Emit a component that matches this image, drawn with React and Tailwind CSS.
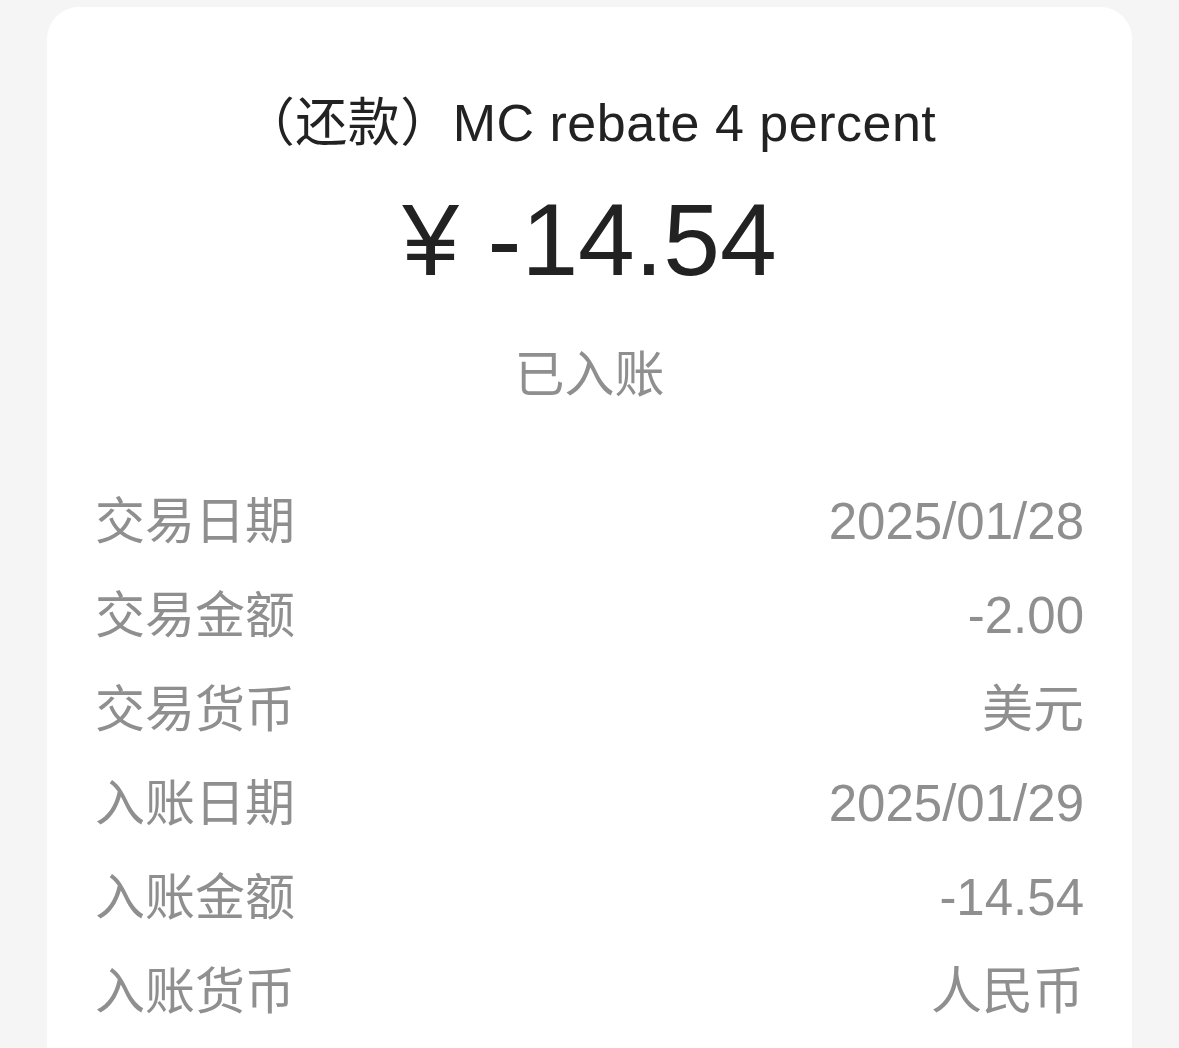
const rows = [
  { label: "交易日期", value: "2025/01/28" },
  { label: "交易金额", value: "-2.00" },
  { label: "交易货币", value: "美元" },
  { label: "入账日期", value: "2025/01/29" },
  { label: "入账金额", value: "-14.54" },
  { label: "入账货币", value: "人民币" },
];

export default function App() {
  return (
    <div
      className="min-h-screen bg-[#f5f5f5] px-[47px] pt-[7px]"
      style={{ fontFamily: '"Liberation Sans", "Noto Sans CJK SC", sans-serif' }}
    >
      <div className="bg-white rounded-[32px] px-[48px] pt-[86px] pb-10 min-h-[1100px]">
        <h1 className="text-center text-[52px] leading-[60px] tracking-[0.5px] text-[#222222] font-normal">
          （还款）MC rebate 4 percent
        </h1>
        <div className="mt-[27px] text-center text-[102px] leading-[120px] text-[#222222]">
          ¥ -14.54
        </div>
        <div className="mt-[45px] text-center text-[50px] leading-[60px] text-[#8f8f8f]">
          已入账
        </div>

        <div className="mt-[70px] flex flex-col">
          {rows.map((row) => (
            <div
              key={row.label}
              className="flex items-center justify-between h-[94px] text-[#8f8f8f]"
            >
              <span className="text-[50px]">{row.label}</span>
              <span className="text-[51px]">{row.value}</span>
            </div>
          ))}
        </div>
      </div>
    </div>
  );
}
